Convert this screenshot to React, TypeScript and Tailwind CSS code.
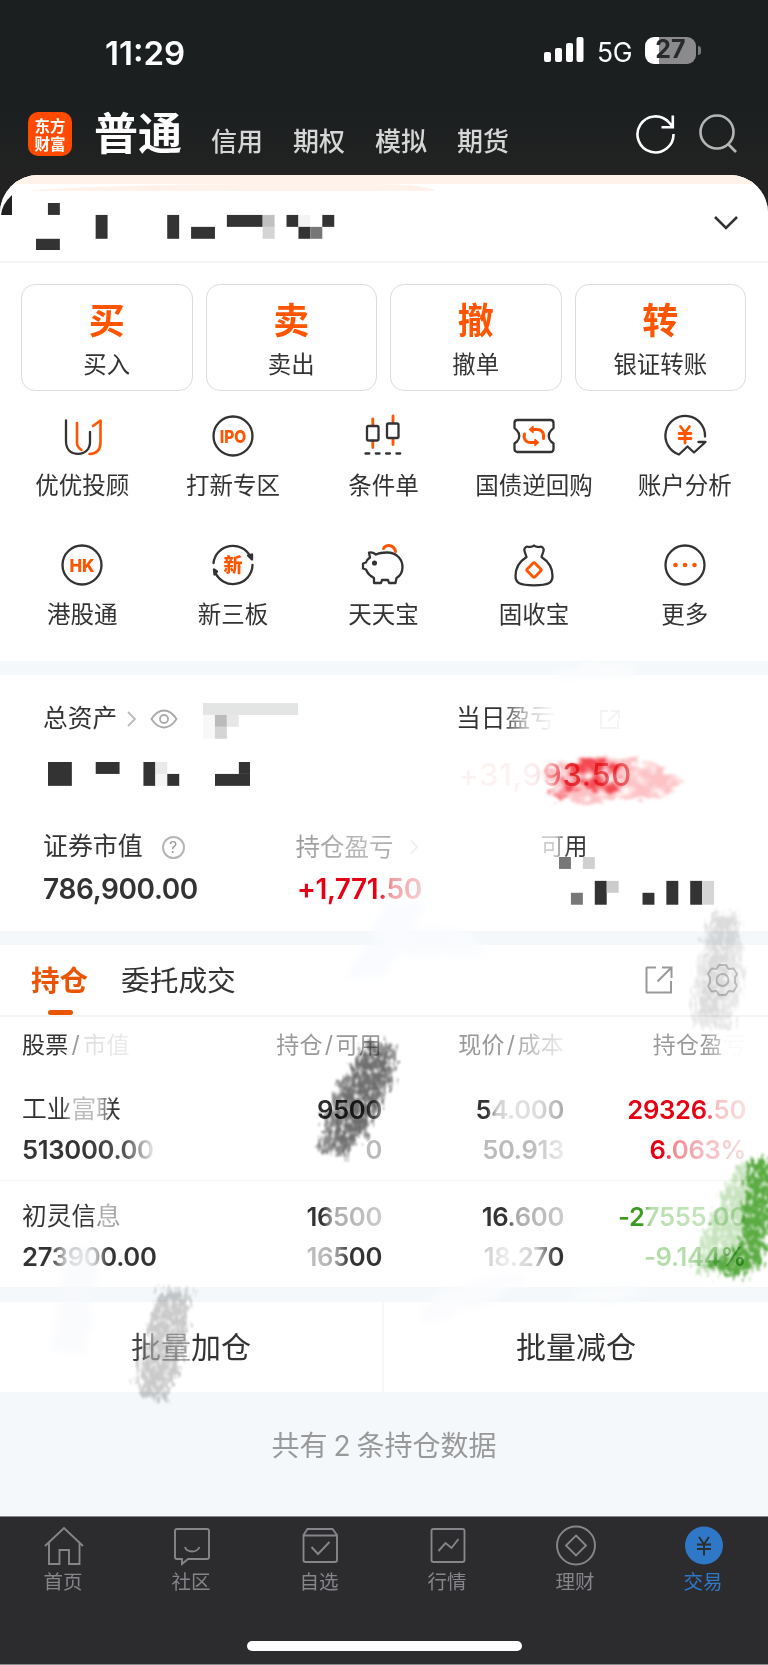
import React from "react";
import { clsx } from "clsx";

type Cell = [x: number, y: number, w: number, h: number, fill: string];

/* Pixelated cover, measured in cells of 11.93px */
const Mosaic = ({
  cols,
  rows,
  cells,
  className,
}: {
  cols: number;
  rows: number;
  cells: Cell[];
  className?: string;
}) => (
  <svg
    viewBox={`0 0 ${cols} ${rows}`}
    width={cols * 11.93}
    height={rows * 11.93}
    className={clsx("absolute", className)}
  >
    {cells.map(([x, y, w, h, fill], i) => (
      <rect key={i} x={x} y={y} width={w} height={h} fill={fill} />
    ))}
  </svg>
);

const Icon = ({ children }: { children: React.ReactNode }) => (
  <svg
    viewBox="0 0 44 44"
    className="h-11 w-11 overflow-visible"
    fill="none"
    stroke="#333333"
    strokeWidth="2.300"
    strokeLinecap="round"
    strokeLinejoin="round"
  >
    {children}
  </svg>
);

const Glyph = ({ size, children }: { size: number; children: string }) => (
  <text
    x="22"
    y={22 + size * 0.365}
    textAnchor="middle"
    fontSize={size}
    fontWeight="800"
    fill="#ff5500"
    stroke="none"
    fontFamily="Inter, 'Noto Sans CJK SC', sans-serif"
  >
    {children}
  </text>
);

const shortcuts = [
  {
    label: "优优投顾",
    icon: (
      <Icon>
        <path d="M6 6.500V27c0 8 4.500 12.800 12 12.800S30 35 30 28V18" />
        <path d="M17 9v20c0 3 1.500 5 4.500 7M33 12l7.500-5.500V28c0 7.500-4 11.800-11 12" stroke="#ff5500" strokeWidth="2.600" />
      </Icon>
    ),
  },
  {
    label: "打新专区",
    icon: (
      <Icon>
        <circle cx="22" cy="22" r="19.500" />
        <g transform="translate(22 0) scale(.86 1) translate(-22 0)">
          <Glyph size={18}>IPO</Glyph>
        </g>
      </Icon>
    ),
  },
  {
    label: "条件单",
    icon: (
      <Icon>
        <path d="M11.800 5v6M11.800 27v6.500M32 2v6.500M32 24.500v6" stroke="#ff5500" strokeWidth="2.800" />
        <rect x="6" y="12" width="11.500" height="14.500" rx="1.500" />
        <rect x="26" y="9.500" width="11.500" height="14.500" rx="1.500" />
        <path d="M4.500 39.500h35" strokeDasharray="3.800 6.500" />
      </Icon>
    ),
  },
  {
    label: "国债逆回购",
    icon: (
      <Icon>
        <path d="M5.500 6h33q3 0 3 3v5l-2.500 2.500c-3 3-3 8 0 11l2.500 2v5.500q0 3-3 3h-33q-3 0-3-3v-5.500l2.500-2c3-3 3-8 0-11L2.500 14V9q0-3 3-3z" />
        <g stroke="#ff5500" strokeWidth="3">
          <path d="M12.500 20c-1.500 5 2 9 6 8.500h5M31.500 24.500c1-5.500-2-9-6-9h-5" />
          <path d="M21 12.500v6l-3.500-3zM23 25.500v6l3.500-3z" fill="#ff5500" strokeWidth="1.500" />
        </g>
      </Icon>
    ),
  },
  {
    label: "账户分析",
    icon: (
      <Icon>
        <path d="M42 22.500A19.800 19.800 0 1 0 16 40.500l8.500-8 6.500 6L42.500 28H35.500" />
        <path d="M17.500 12.500l4.500 6 4.500-6M16 19.500h12M16 24.500h12M22 19v10" stroke="#ff5500" strokeWidth="2.800" />
      </Icon>
    ),
  },
  {
    label: "港股通",
    icon: (
      <Icon>
        <circle cx="22" cy="22" r="19.500" />
        <g transform="translate(22 0) scale(.94 1) translate(-22 0)">
          <Glyph size={18}>HK</Glyph>
        </g>
      </Icon>
    ),
  },
  {
    label: "新三板",
    icon: (
      <Icon>
        <path d="M2.500 20A19.500 19.500 0 0 1 39.500 14M41.500 22A19.500 19.500 0 0 1 4 29" />
        <path d="M37 12.500l4-1v5zM3 26.500l.5 5 2.500-3z" fill="#333333" />
        <Glyph size={19}>新</Glyph>
      </Icon>
    ),
  },
  {
    label: "天天宝",
    icon: (
      <Icon>
        <path d="M22.500 5.500c3-4.500 10.500-4 12 3" stroke="#ff5500" strokeWidth="3" />
        <path d="M8 9.500c2-.5 5 .5 7 2 3-1.500 7-2 11-2 10 0 15.500 7 15.500 14.500 0 5-2.500 9-6 11l-1 5h-6.500l-1-3h-6l-1 3H13v-5c-4-2-6.500-4.500-8-8.500l-3-1v-5l3-1c.5-2 2.500-4 4-5z" />
        <circle cx="13.500" cy="20" r="1.400" fill="#333333" />
      </Icon>
    ),
  },
  {
    label: "固收宝",
    icon: (
      <Icon>
        <path d="M14.500 14l-2-6c-1-3 2-5 4-4 2-.500 3.500.500 5.500-1.500 2 2 3.500 1 5.500 1.500 2-1 5 1 4 4l-2 6c7 4.500 11 11 11 19 0 7-4 9.300-18.500 9.300S3.500 40 3.500 33c0-8 4-14.500 11-19" />
        <rect x="16.500" y="21.500" width="11" height="11" rx="1.500" transform="rotate(45 22 27)" stroke="#ff5500" strokeWidth="2.800" />
      </Icon>
    ),
  },
  {
    label: "更多",
    icon: (
      <Icon>
        <circle cx="22" cy="22" r="19.500" />
        <g fill="#ff5500" stroke="none">
          <circle cx="12.500" cy="22" r="2.300" />
          <circle cx="22" cy="22" r="2.300" />
          <circle cx="31.500" cy="22" r="2.300" />
        </g>
      </Icon>
    ),
  },
];

const actions = [
  ["买", "买入"],
  ["卖", "卖出"],
  ["撤", "撤单"],
  ["转", "银证转账"],
];

const navItems = [
  {
    label: "首页",
    icon: <path d="M2 22L21 4l19 18M6 19v21h10.500V26h9.500v14H36.500V19" />,
  },
  {
    label: "社区",
    icon: <path d="M6 5h30q2 0 2 2v26q0 2-2 2H17l-6 5v-5H6q-2 0-2-2V7q0-2 2-2zM14 23c2 6 12 6 14.500 0" />,
  },
  {
    label: "自选",
    icon: <path d="M8.500 5h25l4.500 6v25q0 2-2 2H6.500q-2 0-2-2V11zM5 11.500h32.500M12.500 23l6.500 7 11.500-12" />,
  },
  {
    label: "行情",
    icon: <path d="M6.500 5h29q2 0 2 2v29q0 2-2 2h-29q-2 0-2-2V7q0-2 2-2zM11.500 27l7-8 6 5 7-9" />,
  },
  {
    label: "理财",
    icon: (
      <>
        <circle cx="21" cy="21.500" r="19" />
        <path d="M21 11.500l10 10-10 10-10-10z" />
      </>
    ),
  },
  {
    label: "交易",
    icon: (
      <>
        <circle cx="21" cy="21.500" r="19" fill="#2f78c8" stroke="none" />
        <path d="M16 13l5 7 5-7M14 20.500h14M14 25h14M21 20v11.500" stroke="#2c2c2e" />
      </>
    ),
  },
];

const holdings = [
  {
    name: "工业富联",
    nameFade: "bg-[linear-gradient(90deg,#333_40%,#bbb_52%,#bbb_78%,#333_92%)]",
    value: "513000.00",
    valueFade: "bg-[linear-gradient(90deg,#333_45%,#555_78%,#ddd_98%)]",
    amount: "9500",
    amountFade: "bg-[linear-gradient(90deg,#2d2d2d_70%,#888_100%)]",
    usable: "0",
    usableFade: "bg-[#bbb]",
    price: "54.000",
    priceFade: "bg-[linear-gradient(90deg,#333_14%,#ccc_24%,#e2e2e2_40%,#ddd_70%,#aaa_100%)]",
    cost: "50.913",
    costFade: "bg-[linear-gradient(90deg,#bbb,#bbb_60%,#eee)]",
    profit: "29326.50",
    profitFade: "bg-[linear-gradient(90deg,#e60012_64%,#f7c3c6_76%,#fae0e2)]",
    rate: "6.063%",
    rateFade: "bg-[linear-gradient(90deg,#e60012_14%,#f08a90_26%,#f7c0c4_60%,#f5dcdc)]",
  },
  {
    name: "初灵信息",
    nameFade: "bg-[linear-gradient(90deg,#333_70%,#bbb_82%,#999)]",
    value: "273900.00",
    valueFade: "bg-[linear-gradient(90deg,#333_20%,#aaa_32%,#ccc_48%,#333_64%)]",
    amount: "16500",
    amountFade: "bg-[linear-gradient(90deg,#333_22%,#aaa_36%,#ccc)]",
    usable: "16500",
    usableFade: "bg-[linear-gradient(90deg,#bbb_20%,#aaa_38%,#333_56%)]",
    price: "16.600",
    priceFade: "bg-[linear-gradient(90deg,#333_30%,#aaa_42%,#ccc)]",
    cost: "18.270",
    costFade: "bg-[linear-gradient(90deg,#ccc,#eee_30%,#ccc_65%,#333_90%)]",
    profit: "-27555.00",
    profitFade: "bg-[linear-gradient(90deg,#3a9b20_18%,#b9dfae_26%,#cfe9c7)]",
    rate: "-9.144%",
    rateFade: "bg-[linear-gradient(90deg,#b4dcaa,#b7deae_70%,#66b650)]",
  },
];

const Faded = ({ className, children }: { className?: string; children: React.ReactNode }) => (
  <span className={clsx("whitespace-nowrap bg-clip-text text-transparent", className)}>{children}</span>
);

/* Marker strokes scribbled over the page */
const Scribbles = () => (
  <>
    <svg className="pointer-events-none absolute inset-0" width="768" height="1665" viewBox="0 0 768 1665" fill="none">
      <defs>
        <filter id="soft" x="-30%" y="-30%" width="160%" height="160%">
          <feTurbulence type="fractalNoise" baseFrequency="0.05" numOctaves="2" seed="2" result="n" />
          <feDisplacementMap in="SourceGraphic" in2="n" scale="14" />
          <feGaussianBlur stdDeviation="4" />
        </filter>
      </defs>
      <g filter="url(#soft)">
        <path d="M545 678q24-18 66-14l26 0-8 14z" fill="#fbfcfd" />
        <path d="M385 905l40-6-36 75-45 4z" fill="#f7fafd" fillOpacity=".75" />
        <path d="M365 928l105 2 20 28-90-3z" fill="#fafbfe" fillOpacity=".8" />
        <path d="M68 1248l34-4-18 110-34-2z" fill="#f7f9fc" fillOpacity=".6" />
        <path d="M445 1287l70-16 14 14-100 40-14-8z" fill="#fbfbfe" fillOpacity=".85" />
        <path d="M575 1290l75-4-25 16-50 0z" fill="#f9fbfd" />
      </g>
    </svg>
    <svg
      className="pointer-events-none absolute inset-0 mix-blend-multiply"
      width="768"
      height="1665"
      viewBox="0 0 768 1665"
      fill="none"
    >
      <defs>
        <filter id="bristle" x="-30%" y="-30%" width="160%" height="160%" colorInterpolationFilters="sRGB">
          <feTurbulence type="fractalNoise" baseFrequency="0.28 0.09" numOctaves="3" seed="4" result="n" />
          <feDisplacementMap in="SourceGraphic" in2="n" scale="26" xChannelSelector="R" yChannelSelector="G" result="d" />
          <feTurbulence type="fractalNoise" baseFrequency="0.22 0.16" numOctaves="2" seed="9" />
          <feColorMatrix values="0 0 0 0 0  0 0 0 0 0  0 0 0 0 0  0 0 0 -3 2.500" result="m" />
          <feComposite in="d" in2="m" operator="in" />
          <feGaussianBlur stdDeviation="0.8" />
        </filter>
        <filter id="smear" x="-30%" y="-40%" width="160%" height="180%" colorInterpolationFilters="sRGB">
          <feTurbulence type="fractalNoise" baseFrequency="0.07 0.14" numOctaves="4" seed="7" result="n" />
          <feDisplacementMap in="SourceGraphic" in2="n" scale="24" xChannelSelector="R" yChannelSelector="G" result="d" />
          <feTurbulence type="fractalNoise" baseFrequency="0.07" numOctaves="3" seed="3" />
          <feColorMatrix values="0 0 0 0 0  0 0 0 0 0  0 0 0 0 0  0 0 0 -3 2.400" result="m" />
          <feComposite in="d" in2="m" operator="in" />
          <feGaussianBlur stdDeviation="1.800" />
        </filter>
      </defs>
      <g filter="url(#smear)">
        <path d="M540 775q26-20 66-18l52 8 20 16-8 16-75 4-45-3 6-14z" fill="#f5404a" fillOpacity=".32" />
        <path d="M575 763q30-8 45 4l0 22-14 6-30-11-15 14-12-2 14-16z" fill="#f0202c" fillOpacity=".75" />
      </g>
      <g filter="url(#bristle)">
        {/* beside the settings gear */}
        <path d="M712 912l27 0 4 66-12 50-38-4 3-54z" fill="#c9c9c9" fillOpacity=".42" />
        <path d="M714 912l24 4-20 104-20-4z" fill="#c6c6c6" fillOpacity=".38" />
        {/* over the quantity column */}
        <path d="M367 1040l31 6-4 28-26 58-26 28-24-14 12-44z" fill="#606060" fillOpacity=".72" />
        <path d="M364 1050l28 6-24 66-20 26-16-8 8-34z" fill="#606060" fillOpacity=".65" />
        {/* over the batch buttons */}
        <path d="M160 1288l30 2-6 66-20 46-25-7-1-32z" fill="#bdbdbd" fillOpacity=".8" />
        {/* green */}
        <path d="M740 1162l28-6v84l-15 36-58-2 8-42z" fill="#63b24b" fillOpacity=".36" />
        <path d="M749 1162l22-4v72l-12 38-26 8-30-10 36-18z" fill="#36981a" fillOpacity=".75" />
      </g>
    </svg>
  </>
);

const StatusBar = () => (
  <div className="flex h-[88px] items-end justify-between pr-[67px] pl-[105px] text-white">
    <span className="mb-[19px] text-[33px] leading-8 font-semibold tracking-[0px]">11:29</span>
    <div className="mb-[22px] flex items-center">
      <svg width="40" height="26" viewBox="0 0 40 26" fill="#fff">
        <rect x="0" y="15" width="7" height="10" rx="2" />
        <rect x="11" y="11" width="7" height="14" rx="2" />
        <rect x="22" y="6" width="7" height="19" rx="2" />
        <rect x="32.500" y="0" width="7" height="25" rx="2" />
      </svg>
      <span className="mt-1 ml-[13px] text-[26.500px] leading-7 tracking-[-0.500px]">5G</span>
      <div className="ml-[13px] flex h-[27px] w-[51px] items-center justify-center rounded-[9px] bg-[linear-gradient(90deg,#fff_27%,#8b8b8d_27%)] text-[25px] font-bold text-[#272a2b]">
        27
      </div>
      <div className="ml-0.5 h-[9px] w-[3px] rounded-r-full bg-[#77797a]" />
    </div>
  </div>
);

const TopTabs = () => (
  <div className="flex h-[87px] items-start pr-[31px] pl-7">
    <div className="mt-6 flex h-11 w-11 flex-col items-center justify-center rounded-[10px] bg-[#ff4a00] font-[Noto_Sans_CJK_SC,sans-serif] text-[15.500px] leading-[18.500px] font-bold text-white">
      <p>东方</p>
      <p>财富</p>
    </div>
    <span className="mt-[24px] ml-[22px] text-[44px] leading-[44px] font-bold text-white">普通</span>
    <div className="mt-[40px] ml-[29px] flex gap-[30px] text-[26px] leading-[27px] font-medium text-[#d6d6d6]">
      {["信用", "期权", "模拟", "期货"].map((t) => (
        <span key={t}>{t}</span>
      ))}
    </div>
    <div className="mt-[26px] ml-auto flex gap-[23px]">
      <svg width="40" height="40" viewBox="0 0 40 40" fill="none" stroke="#fff" strokeWidth="2.600">
        <path d="M37.500 20A18 18 0 1 1 33 8.500l3.500 4M36.800 1.500v11.800H25.500" />
      </svg>
      <svg width="38" height="40" viewBox="0 0 38 40" fill="none" stroke="#b5b5b5" strokeWidth="2.600">
        <circle cx="18" cy="18" r="16.500" />
        <path d="M29 30l8 8" />
      </svg>
    </div>
  </div>
);

const AccountBar = () => (
  <div className="relative flex h-[88px] items-center justify-end border-b-2 border-[#f3f3f4] pr-[29px]">
    <svg className="absolute top-0 left-0" width="768" height="42" viewBox="0 0 768 42">
      <path d="M0 0h768v9H360q70 0 75 7H28q60-6 240-7H0z" fill="#fff2ea" />
      <path d="M12 20v20H1q1-11 11-20z" fill="#222" />
    </svg>
    <Mosaic
      className="top-[27.500px] left-9"
      cols={26}
      rows={4}
      cells={[
        [1, 0, 1, 1, "#333"],
        [0, 3, 2, 1, "#333"],
        [5, 1, 1, 2, "#333"],
        [11, 1, 1, 2, "#333"],
        [13, 2, 2, 1, "#333"],
        [16, 1, 3, 1, "#333"],
        [19, 1, 1, 1, "#c0c0c0"],
        [19, 2, 1, 1, "#d5d5d5"],
        [21, 1, 1, 1, "#333"],
        [22, 1, 1, 1, "#f4f4f4"],
        [22, 2, 1, 1, "#333"],
        [23, 2, 1, 1, "#777"],
        [24, 1, 1, 1, "#333"],
      ]}
    />
    <svg className="mt-2.5" width="26" height="16" viewBox="0 0 26 16" fill="none" stroke="#333" strokeWidth="2.600">
      <path d="M2 2l11 11L24 2" />
    </svg>
  </div>
);

const Assets = () => (
  <section className="relative h-[256px] pt-[29px] pl-[43px] text-[#333]">
    <div className="flex h-[30px] items-center text-[24.700px]">
      <span>总资产</span>
      <svg className="ml-[9px]" width="12" height="16" viewBox="0 0 12 16" fill="none" stroke="#bbb" strokeWidth="1.800">
        <path d="M2 1l7 7-7 7" />
      </svg>
      <svg className="ml-3" width="28" height="20" viewBox="0 0 28 20" fill="none" stroke="#aaa" strokeWidth="1.800">
        <path d="M1.500 10Q7 1.500 14 1.500T26.500 10Q21 18.500 14 18.500T1.500 10z" />
        <circle cx="14" cy="10" r="4" />
      </svg>
      <Faded className="ml-[278px] bg-[linear-gradient(90deg,#333_45%,#888_60%,#ccc_75%,#f5f5f5_95%)]">当日盈亏</Faded>
      <svg className="ml-[44px]" width="21" height="21" viewBox="0 0 21 21" fill="none" stroke="#f4f4f4" strokeWidth="2">
        <path d="M9 2H2v17h17v-8M12 2h8v8M20 2L9 12" />
      </svg>
    </div>
    <div className="flex h-[82px] items-center pl-[415px]">
      <Faded className="bg-[linear-gradient(90deg,#fdf2f2_40%,#fae0e1_50%,#ee4a52_62%,#f07a80)] text-[31px] font-medium tracking-[0.600px]">
        +31,993.50
      </Faded>
    </div>
    <div className="flex h-[50px] items-center pt-3 text-[24.900px]">
      <span>证券市值</span>
      <span className="ml-[19px] flex h-[23px] w-[23px] items-center justify-center rounded-full border-2 border-[#b5b5b5] text-base text-[#999]">
        ?
      </span>
      <Faded className="ml-[111px] bg-[linear-gradient(90deg,#999,#bbb_70%,#aaa)] text-[24.500px]">持仓盈亏</Faded>
      <svg className="ml-[15px]" width="11" height="16" viewBox="0 0 12 16" fill="none" stroke="#eee" strokeWidth="1.800">
        <path d="M2 1l7 7-7 7" />
      </svg>
      <Faded className="ml-[121px] bg-[linear-gradient(90deg,#ccc_30%,#333_60%)] text-[23.500px]">可用</Faded>
    </div>
    <div className="flex h-[45px] items-center text-[28px] font-semibold">
      <span className="w-[254px] tracking-[-0.350px]">786,900.00</span>
      <Faded className="bg-[linear-gradient(90deg,#e60012_66%,#f0a0a4_76%,#f8c8ca)] tracking-[-0.400px]">+1,771.50</Faded>
    </div>
    <Mosaic
      className="top-[28px] left-[203px]"
      cols={8}
      rows={3}
      cells={[
        [0, 0, 8, 1, "#e3e4e4"],
        [0, 1, 1, 2, "#f8f8f9"],
        [1, 1, 1, 1, "#bbb"],
        [2, 1, 1, 1, "#e7e7e8"],
        [1, 2, 1, 1, "#d5d5d5"],
      ]}
    />
    <Mosaic
      className="top-[87px] left-[47.700px]"
      cols={17}
      rows={2}
      cells={[
        [0, 0, 2, 2, "#333"],
        [4, 0, 2, 1, "#333"],
        [8, 0, 1, 2, "#333"],
        [9, 0, 1, 1, "#e9e9e9"],
        [9, 1, 1, 1, "#f5f5f5"],
        [10, 1, 1, 1, "#333"],
        [14, 1, 3, 1, "#333"],
        [16, 0, 1, 1, "#333"],
      ]}
    />
    <Mosaic
      className="top-[182px] left-[559px]"
      cols={13}
      rows={4}
      cells={[
        [0, 0, 1, 1, "#777"],
        [2, 0, 1, 1, "#d0d0d0"],
        [1, 3, 1, 1, "#777"],
        [3, 2, 1, 2, "#333"],
        [4, 2, 1, 1, "#ccc"],
        [7, 3, 1, 1, "#333"],
        [9, 2, 1, 2, "#333"],
        [11, 2, 1, 2, "#333"],
        [12, 2, 1, 2, "#d5d5d5"],
      ]}
    />
  </section>
);

const columns = "grid grid-cols-[232px_128px_182px_182px]";

const Holdings = () => (
  <section>
    <div className="flex h-[72px] items-center border-b-2 border-[#f5f5f6] pr-[29px] pl-[31px] text-[28.500px]">
      <div className="relative flex h-full items-center pt-[2px] font-bold text-[#ea5504]">
        持仓
        <span className="absolute bottom-0 left-[17px] h-[5px] w-[25px] rounded-sm bg-[#ea5504]" />
      </div>
      <span className="ml-[33px] pt-[2px] text-[28.700px] text-[#333]">委托成交</span>
      <svg className="ml-auto" width="28" height="28" viewBox="0 0 28 28" fill="none" stroke="#999" strokeWidth="2">
        <path d="M11 1.500H2q-.5 0-.5.5v24q0 .5.5.5h24V15M17 1.500h9.500V12M26 2L12.500 15.500" />
      </svg>
      <svg className="ml-[33px]" width="33" height="32" viewBox="0 0 33 32" fill="none" stroke="#c8c8c8" strokeWidth="1.800">
        <path d="M13 1h7l2.500 4 5-.5L31 10l-2 3.500v5L31 22l-3.500 5.500-5-.5L20 31h-7l-2.500-4-5 .5L2 22l2-3.500v-5L2 10l3.500-5.500 5 .5z" strokeLinejoin="round" />
        <circle cx="16.500" cy="16" r="6" />
      </svg>
    </div>
    <div className={clsx(columns, "h-[56px] items-center pl-[22px] text-[23px] tracking-[0.300px] text-[#999]")}>
      <span className="whitespace-nowrap">
        <span className="text-[#333]">股票</span>
        <span className="px-[3px]">/</span>
        <Faded className="bg-[linear-gradient(90deg,#ddd,#ececec)]">市值</Faded>
      </span>
      <span className="text-right whitespace-nowrap">持仓<span className="px-[2px]">/</span>可用</span>
      <span className="text-right whitespace-nowrap">
        现价<span className="px-[2px]">/</span>
        <Faded className="bg-[linear-gradient(90deg,#aaa,#eee)]">成本</Faded>
      </span>
      <span className="text-right">
        <Faded className="bg-[linear-gradient(90deg,#999_55%,#bbb_70%,#fafafa_78%)]">持仓盈亏</Faded>
      </span>
    </div>
    {holdings.map((h, i) => (
      <div
        key={h.name}
        className={clsx(
          columns,
          "auto-rows-[40px] items-center pl-[22px] text-[25.700px] font-semibold tracking-[-0.350px]",
          i === 0 ? "h-[108px] border-b border-[#f4f4f4] pt-[17px]" : "h-[106px] pt-[16px]"
        )}
      >
        <span className="flex font-normal tracking-normal">
          <Faded className={clsx("text-[24.700px]", h.nameFade)}>{h.name}</Faded>
        </span>
        <span className="text-right">
          <Faded className={h.amountFade}>{h.amount}</Faded>
        </span>
        <span className="text-right">
          <Faded className={h.priceFade}>{h.price}</Faded>
        </span>
        <span className="text-right">
          <Faded className={h.profitFade}>{h.profit}</Faded>
        </span>
        <span className="flex">
          <Faded className={h.valueFade}>{h.value}</Faded>
        </span>
        <span className="text-right">
          <Faded className={h.usableFade}>{h.usable}</Faded>
        </span>
        <span className="text-right">
          <Faded className={h.costFade}>{h.cost}</Faded>
        </span>
        <span className="text-right">
          <Faded className={h.rateFade}>{h.rate}</Faded>
        </span>
      </div>
    ))}
  </section>
);

const BottomNav = () => (
  <nav className="flex h-[149px] flex-col items-center border-y border-[#8a8a8c] bg-[#2c2c2e]">
    <div className="grid w-full grid-cols-6 pt-[7px]">
      {navItems.map((item, i) => (
        <div
          key={item.label}
          className={clsx("flex flex-col items-center", i === 5 ? "text-[#2f78c8]" : "text-[#85858a]")}
        >
          <svg width="42" height="42" viewBox="0 0 42 42" fill="none" stroke="currentColor" strokeWidth="1.900">
            {item.icon}
          </svg>
          <span className="mt-[4px] -ml-[2px] text-[19.500px] leading-6">{item.label}</span>
        </div>
      ))}
    </div>
    <div className="mt-auto mb-[13px] h-[10px] w-[275px] rounded-full bg-white" />
  </nav>
);

export default function App() {
  return (
    <div className="relative h-[1665px] w-[768px] overflow-hidden bg-[linear-gradient(#1b1f20_100px,#222_175px)] font-[Inter,Noto_Sans_CJK_SC,sans-serif]">
      <StatusBar />
      <TopTabs />
      <main className="h-[1341px] overflow-hidden rounded-t-[38px] bg-[#f4f8fa]">
        <section className="h-[486px] bg-white">
          <AccountBar />
          <div className="grid grid-cols-4 gap-[13px] pt-[21px] pr-[22px] pl-[21px]">
            {actions.map(([mark, label]) => (
              <div
                key={label}
                className="flex h-[107px] flex-col items-center rounded-[14px] border border-[#dcdcdc] pt-[16px]"
              >
                <span className="text-[36px] leading-10 font-bold text-[#ff5500]">{mark}</span>
                <span className="mt-2 text-[23.400px] leading-8 text-[#333]">{label}</span>
              </div>
            ))}
          </div>
          <div className="grid grid-cols-5 gap-y-[29px] pt-[23px] pr-[8px] pl-[7px]">
            {shortcuts.map((s) => (
              <div key={s.label} className="flex h-[100px] flex-col items-center">
                {s.icon}
                <span className="mt-3 text-[23.500px] leading-8 whitespace-nowrap text-[#333]">{s.label}</span>
              </div>
            ))}
          </div>
        </section>
        <div className="mt-[14px] bg-white">
          <Assets />
        </div>
        <div className="mt-[14px] h-[342px] bg-white">
          <Holdings />
        </div>
        <div className="mt-[15px] grid h-[90px] grid-cols-2 bg-white text-[30px] text-[#333]">
          <div className="flex items-center justify-center border-r-2 border-[#f4f8fa]">
            <Faded className="bg-[linear-gradient(90deg,#444_8%,#aaa_16%,#aaa_47%,#333_52%)]">批量加仓</Faded>
          </div>
          <div className="flex items-center justify-center">批量减仓</div>
        </div>
        <div className="flex h-[108px] items-center justify-center text-[28px] text-[#999]">
          共有<span className="mx-[6px]">2</span>条持仓数据
        </div>
      </main>
      <BottomNav />
      <Scribbles />
    </div>
  );
}
